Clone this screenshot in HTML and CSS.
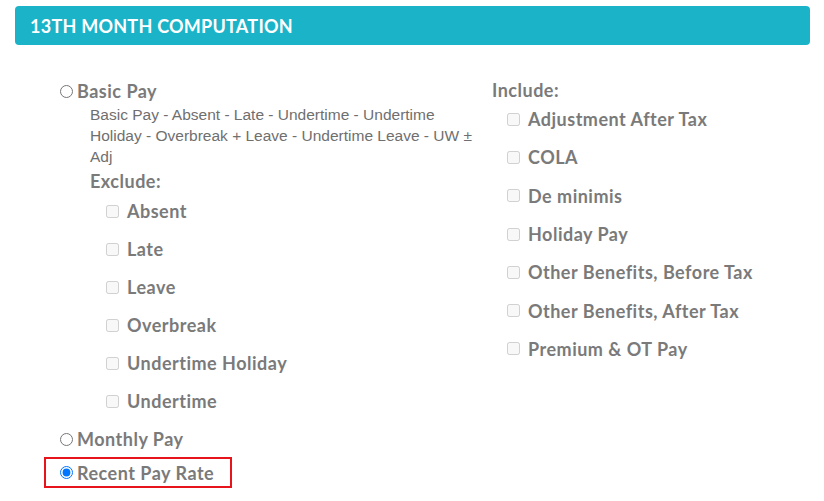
FILE: index.html
```html
<!DOCTYPE html>
<html>
<head>
<meta charset="utf-8">
<link rel="stylesheet" href="styles.css">
</head>
<body>
<div class="page">
  <div class="panel-header">13TH MONTH COMPUTATION</div>
  <div class="columns">
    <div class="col-left">
      <label class="radio-row first">
        <input type="radio" name="basis" class="radio">
        <span>Basic Pay</span>
      </label>
      <div class="sub">
        <p class="desc">Basic Pay - Absent - Late - Undertime - Undertime Holiday - Overbreak + Leave - Undertime Leave - UW ± Adj</p>
        <div class="group-title">Exclude:</div>
        <div class="check-list">
          <label class="check-row"><input type="checkbox" class="check" disabled><span>Absent</span></label>
          <label class="check-row"><input type="checkbox" class="check" disabled><span>Late</span></label>
          <label class="check-row"><input type="checkbox" class="check" disabled><span>Leave</span></label>
          <label class="check-row"><input type="checkbox" class="check" disabled><span>Overbreak</span></label>
          <label class="check-row"><input type="checkbox" class="check" disabled><span>Undertime Holiday</span></label>
          <label class="check-row"><input type="checkbox" class="check" disabled><span>Undertime</span></label>
        </div>
      </div>
      <label class="radio-row monthly">
        <input type="radio" name="basis" class="radio">
        <span>Monthly Pay</span>
      </label>
      <div class="highlight">
        <label class="radio-row">
          <input type="radio" name="basis" class="radio" checked>
          <span>Recent Pay Rate</span>
        </label>
      </div>
    </div>
    <div class="col-right">
      <div class="group-title include">Include:</div>
      <div class="check-list">
        <label class="check-row"><input type="checkbox" class="check" disabled><span>Adjustment After Tax</span></label>
        <label class="check-row"><input type="checkbox" class="check" disabled><span>COLA</span></label>
        <label class="check-row"><input type="checkbox" class="check" disabled><span>De minimis</span></label>
        <label class="check-row"><input type="checkbox" class="check" disabled><span>Holiday Pay</span></label>
        <label class="check-row"><input type="checkbox" class="check" disabled><span>Other Benefits, Before Tax</span></label>
        <label class="check-row"><input type="checkbox" class="check" disabled><span>Other Benefits, After Tax</span></label>
        <label class="check-row"><input type="checkbox" class="check" disabled><span>Premium &amp; OT Pay</span></label>
      </div>
    </div>
  </div>
</div>
</body>
</html>
```
FILE: styles.css
```css
* { box-sizing: border-box; }
html, body { margin: 0; padding: 0; background: #ffffff; }
body {
  font-family: Lato, "Noto Sans", sans-serif;
  color: #7a7a7a;
}
.page {
  padding: 6px 14px 0 15px;
}
.panel-header {
  height: 39px;
  background: #1ab3c8;
  border-radius: 4px;
  color: #ffffff;
  font-weight: 700;
  font-size: 18px;
  letter-spacing: 0.25px;
  display: flex;
  align-items: center;
  padding-left: 15px;
  padding-top: 1px;
}
.columns {
  display: grid;
  grid-template-columns: 448px 1fr;
  padding-left: 29px;
}
.col-left {
  display: flex;
  flex-direction: column;
  align-items: flex-start;
  padding-top: 34px;
}
.radio-row {
  display: flex;
  align-items: center;
  height: 24px;
  padding-left: 16px;
  font-size: 18px;
  font-weight: 700;
  letter-spacing: 0.5px;
  white-space: nowrap;
}
.radio {
  margin: 0 4px 0 0;
  width: 13px;
  height: 13px;
}
.sub {
  padding-left: 46px;
  margin-top: 1px;
}
.desc {
  margin: 0;
  width: 382px;
  font-family: "Liberation Sans", Arial, sans-serif;
  font-size: 15.5px;
  line-height: 21px;
  color: #6f6f6f;
}
.group-title {
  font-size: 18px;
  font-weight: 700;
  letter-spacing: 0.5px;
  height: 22px;
  display: flex;
  align-items: center;
  margin-top: 3px;
}
.check-list {
  display: flex;
  flex-direction: column;
  padding-left: 16px;
}
.check-row {
  display: flex;
  align-items: center;
  height: 38px;
  font-size: 18px;
  font-weight: 700;
  letter-spacing: 0.5px;
  white-space: nowrap;
}
.check {
  margin: 0 8px 0 0;
  width: 13px;
  height: 13px;
}
.monthly {
  margin-top: 7px;
}
.highlight {
  margin-top: 6px;
  border: 2px solid #e8141c;
  height: 31px;
  display: flex;
  align-items: center;
  padding-right: 16px;
}
.highlight .radio-row {
  padding-left: 14px;
}
.col-right {
  padding-top: 34px;
  display: flex;
  flex-direction: column;
}
.col-right .group-title.include {
  margin-top: 0;
  height: 21px;
}
.col-right .check-list {
  padding-left: 15px;
}
.col-right .check-row {
  height: 38.3px;
}
```
